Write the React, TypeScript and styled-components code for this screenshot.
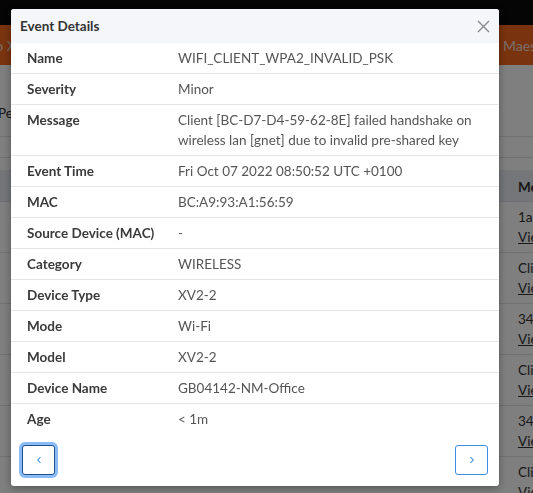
import React from "react";
import styled, { createGlobalStyle } from "styled-components";

const GlobalStyle = createGlobalStyle`
  html, body {
    margin: 0;
    padding: 0;
    width: 533px;
    height: 493px;
    overflow: hidden;
    background: #ffffff;
    font-family: "Lato", "Liberation Sans", sans-serif;
  }
  * { box-sizing: border-box; }
`;

const EVENT_FIELDS: { label: string; value: string }[] = [
  { label: "Name", value: "WIFI_CLIENT_WPA2_INVALID_PSK" },
  { label: "Severity", value: "Minor" },
  {
    label: "Message",
    value: "Client [BC-D7-D4-59-62-8E] failed handshake on wireless lan [gnet] due to invalid pre-shared key",
  },
  { label: "Event Time", value: "Fri Oct 07 2022 08:50:52 UTC +0100" },
  { label: "MAC", value: "BC:A9:93:A1:56:59" },
  { label: "Source Device (MAC)", value: "-" },
  { label: "Category", value: "WIRELESS" },
  { label: "Device Type", value: "XV2-2" },
  { label: "Mode", value: "Wi-Fi" },
  { label: "Model", value: "XV2-2" },
  { label: "Device Name", value: "GB04142-NM-Office" },
  { label: "Age", value: "< 1m" },
];

const BACKGROUND_ROWS = ["1a:2b:3c", "Client", "34:8f:27", "Client", "34:8f:27", "Client"];

const App = () => {
  return (
    <>
      <GlobalStyle />
      <Page>
        <TopNav />
        <BrandBar>
          <BrandText $side="left">Go X</BrandText>
          <BrandText $side="right">Maestro</BrandText>
        </BrandBar>
        <Toolbar>
          <span>Period</span>
        </Toolbar>
        <FilterStrip />
        <EventsTable>
          <TableHeader>
            <span />
            <span>Message</span>
          </TableHeader>
          {BACKGROUND_ROWS.map((text, i) => (
            <TableRow key={i}>
              <span />
              <Cell>
                <span>{text}</span>
                <ViewLink>View</ViewLink>
              </Cell>
            </TableRow>
          ))}
        </EventsTable>
      </Page>
      <Backdrop />
      <Modal>
        <ModalHeader>
          <ModalTitle>Event Details</ModalTitle>
          <CloseButton aria-label="Close">
            <svg width="13" height="13" viewBox="0 0 13 13">
              <path d="M1 1 L12 12 M12 1 L1 12" stroke="#8a8a8a" strokeWidth="1.4" fill="none" />
            </svg>
          </CloseButton>
        </ModalHeader>
        <DetailsList>
          {EVENT_FIELDS.map((field, i) => (
            <DetailRow key={field.label} $last={i === EVENT_FIELDS.length - 1}>
              <Label>{field.label}</Label>
              <Value>{field.value}</Value>
            </DetailRow>
          ))}
        </DetailsList>
        <ModalFooter>
          <NavButton $focused aria-label="Previous">
            <svg width="6" height="8" viewBox="0 0 6 8">
              <path d="M4.5 1 L1.8 4 L4.5 7" stroke="#3d8ee0" strokeWidth="1.1" fill="none" />
            </svg>
          </NavButton>
          <NavButton aria-label="Next">
            <svg width="6" height="8" viewBox="0 0 6 8">
              <path d="M1.5 1 L4.2 4 L1.5 7" stroke="#3d8ee0" strokeWidth="1.1" fill="none" />
            </svg>
          </NavButton>
        </ModalFooter>
      </Modal>
    </>
  );
};

export default App;

const Page = styled.div`
  width: 533px;
  display: flex;
  flex-direction: column;
  background: #ffffff;
  color: #333;
  font-size: 13.5px;

  & > * {
    flex-shrink: 0;
  }
`;

const TopNav = styled.div`
  height: 25px;
  background: #0a0a0a;
`;

const BrandBar = styled.div`
  height: 40px;
  background: #f4671f;
  display: flex;
  align-items: center;
  justify-content: space-between;
  overflow: hidden;
  font-size: 14px;
`;

const BrandText = styled.span<{ $side: "left" | "right" }>`
  color: #f3dccf;
  white-space: nowrap;
  margin-left: ${(p) => (p.$side === "left" ? "-15px" : "0")};
  margin-right: ${(p) => (p.$side === "right" ? "-21px" : "0")};
`;

const Toolbar = styled.div`
  height: 72px;
  display: flex;
  align-items: flex-start;
  padding-top: 38px;
  margin-left: -2px;
  line-height: 20px;
  border-bottom: 1px solid #e2e2e2;
`;

const FilterStrip = styled.div`
  height: 21px;
  border-bottom: 1px solid #e2e2e2;
`;

const EventsTable = styled.div`
  display: flex;
  flex-direction: column;
  margin-top: 12px;
`;

const TableHeader = styled.div`
  display: grid;
  grid-template-columns: 518px 1fr;
  height: 32px;
  padding-top: 2px;
  align-items: center;
  background: #e9edf4;
  font-weight: 700;
  border-bottom: 1px solid #dcdfe6;
`;

const TableRow = styled.div`
  display: grid;
  grid-template-columns: 518px 1fr;
  height: 51px;
  border-bottom: 1px solid #e2e2e2;
`;

const Cell = styled.div`
  display: flex;
  flex-direction: column;
  justify-content: center;
  line-height: 20px;
  white-space: nowrap;
`;

const ViewLink = styled.span`
  text-decoration: underline;
`;

const Backdrop = styled.div`
  position: fixed;
  inset: 0;
  background: rgba(0, 0, 0, 0.5);
`;

const Modal = styled.div`
  position: fixed;
  left: 11px;
  top: 9px;
  width: 488px;
  background: #ffffff;
  border-radius: 3px;
  box-shadow: 0 2px 8px rgba(0, 0, 0, 0.35);
  overflow: hidden;
  font-size: 13.5px;
  color: #333;
`;

const ModalHeader = styled.div`
  height: 34px;
  display: flex;
  align-items: center;
  justify-content: space-between;
  padding: 0 9px 0 9px;
  background: #f5f6fa;
`;

const ModalTitle = styled.div`
  font-weight: 700;
  font-size: 13.5px;
  color: #333;
`;

const CloseButton = styled.button`
  border: none;
  background: transparent;
  padding: 0;
  width: 14px;
  height: 14px;
  display: flex;
  align-items: center;
  justify-content: center;
  cursor: pointer;
`;

const DetailsList = styled.div`
  display: flex;
  flex-direction: column;
`;

const DetailRow = styled.div<{ $last?: boolean }>`
  display: grid;
  grid-template-columns: 151px 1fr;
  padding: 5px 16px 5px 16px;
  line-height: 20px;
  border-bottom: 1px solid ${(p) => (p.$last ? "transparent" : "#e6e6e6")};
`;

const Label = styled.div`
  font-weight: 700;
  color: #3a3a3a;
`;

const Value = styled.div`
  color: #555;
  padding-right: 10px;
`;

const ModalFooter = styled.div`
  display: flex;
  justify-content: space-between;
  padding: 10px 11px 11px 11px;
`;

const NavButton = styled.button<{ $focused?: boolean }>`
  width: 33px;
  height: 30px;
  padding: 0;
  display: flex;
  align-items: center;
  justify-content: center;
  background: #ffffff;
  border-radius: 3px;
  border: 1px solid ${(p) => (p.$focused ? "#1f4f86" : "#3d8ee0")};
  box-shadow: ${(p) => (p.$focused ? "0 0 0 3px rgba(110, 170, 245, 0.8)" : "none")};
  cursor: pointer;
`;
